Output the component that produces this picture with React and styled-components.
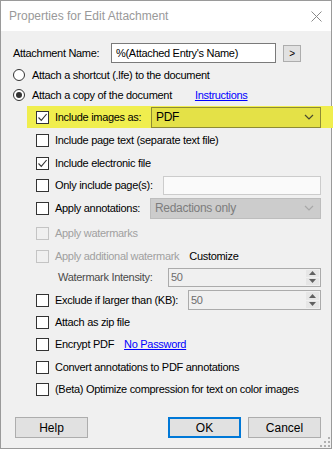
import React from 'react'
import styled, { createGlobalStyle } from 'styled-components'

const GlobalStyle = createGlobalStyle`
  html, body {
    margin: 0;
    padding: 0;
    background: #fff;
  }
  body {
    font-family: "Liberation Sans", Arial, sans-serif;
    font-size: 11px;
    letter-spacing: -0.3px;
    color: #000;
  }
`

const Check = () => (
  <svg width="11" height="11" viewBox="0 0 11 11">
    <path d="M1.5 5.5 L4.3 8.4 L9.6 2" fill="none" stroke="#333" strokeWidth="1.1" />
  </svg>
)

const Chevron = ({ color }) => (
  <svg width="10" height="6" viewBox="0 0 10 6">
    <path d="M1 1 L5 5 L9 1" fill="none" stroke={color} strokeWidth="1.2" />
  </svg>
)

const CheckBox = ({ checked, disabled }) => (
  <Box $disabled={disabled}>{checked && <Check />}</Box>
)

const Spinner = ({ value, width, height }) => (
  <SpinBox $w={width} $h={height}>
    <span>{value}</span>
    <SpinButtons>
      <SpinHalf>
        <svg width="7" height="4" viewBox="0 0 7 4"><path d="M0 4 L3.5 0 L7 4 Z" fill="#606060" /></svg>
      </SpinHalf>
      <SpinHalf>
        <svg width="7" height="4" viewBox="0 0 7 4"><path d="M0 0 L3.5 4 L7 0 Z" fill="#606060" /></svg>
      </SpinHalf>
    </SpinButtons>
  </SpinBox>
)

const Grip = () => (
  <GripMark width="10" height="10" viewBox="0 0 10 10">
    {[[8, 0], [8, 4], [4, 4], [8, 8], [4, 8], [0, 8]].map(([x, y]) => (
      <rect key={`${x}-${y}`} x={x} y={y} width="2" height="2" fill="#b0b0b0" />
    ))}
  </GripMark>
)

const App = () => {
  return (
    <>
      <GlobalStyle />
      <Window>
        <TitleBar>
          <span>Properties for Edit Attachment</span>
          <svg width="11" height="11" viewBox="0 0 11 11">
            <path d="M0.5 0.5 L10.5 10.5 M10.5 0.5 L0.5 10.5" stroke="#8a8a8a" strokeWidth="1" />
          </svg>
        </TitleBar>
        <Body>
          <Row $h={20}>
            <NameLabel>Attachment Name:</NameLabel>
            <NameInput>%(Attached Entry's Name)</NameInput>
            <SmallButton>&gt;</SmallButton>
          </Row>
          <Row $h={20} $mt={2}>
            <Radio />
            <Text $ml={7}>Attach a shortcut (.lfe) to the document</Text>
          </Row>
          <Row $h={20}>
            <Radio $selected />
            <Text $ml={7}>Attach a copy of the document</Text>
            <Link $ml={23}>Instructions</Link>
          </Row>
          <Highlight>
            <CheckBox checked />
            <Text>Include images as:</Text>
            <Select $w={170} $bg="#e4e147" $border="#8e8b35">
              <span>PDF</span>
              <Chevron color="#4a4a30" />
            </Select>
          </Highlight>
          <Row $h={22} $mt={1} $indent={23}>
            <CheckBox />
            <Text>Include page text (separate text file)</Text>
          </Row>
          <Row $h={22} $mt={1} $indent={23}>
            <CheckBox checked />
            <Text>Include electronic file</Text>
          </Row>
          <Row $h={22} $indent={23}>
            <CheckBox />
            <Text>Only include page(s):</Text>
            <TextBox $w={158} />
          </Row>
          <Row $h={22} $mt={1} $indent={23}>
            <CheckBox />
            <Text>Apply annotations:</Text>
            <Select $w={171} $bg="#cccccc" $border="#bdbdbd" $disabled>
              <span>Redactions only</span>
              <Chevron color="#a8a8a8" />
            </Select>
          </Row>
          <Row $h={22} $mt={3} $indent={23}>
            <CheckBox disabled />
            <Text $disabled>Apply watermarks</Text>
          </Row>
          <Row $h={22} $mt={1} $indent={23}>
            <CheckBox disabled />
            <Text $disabled>Apply additional watermark</Text>
            <Text $ml={10}>Customize</Text>
          </Row>
          <Row $h={20} $indent={45}>
            <Text $muted $ml={0}>Watermark Intensity:</Text>
            <Spinner value="50" width={153} height={19} />
          </Row>
          <Row $h={22} $mt={2} $indent={23}>
            <CheckBox />
            <Text>Exclude if larger than (KB):</Text>
            <Spinner value="50" width={133} height={20} />
          </Row>
          <Row $h={22} $indent={23}>
            <CheckBox />
            <Text>Attach as zip file</Text>
          </Row>
          <Row $h={22} $indent={23}>
            <CheckBox />
            <Text>Encrypt PDF</Text>
            <Link $ml={10}>No Password</Link>
          </Row>
          <Row $h={22} $mt={1} $indent={23}>
            <CheckBox />
            <Text>Convert annotations to PDF annotations</Text>
          </Row>
          <Row $h={22} $indent={23}>
            <CheckBox />
            <Text>(Beta) Optimize compression for text on color images</Text>
          </Row>
          <ButtonRow>
            <Button>Help</Button>
            <Spacer />
            <Button $default>OK</Button>
            <Button>Cancel</Button>
          </ButtonRow>
        </Body>
        <Grip />
      </Window>
    </>
  )
}

export default App

const Window = styled.div`
position:relative;
width:332px;
height:449px;
box-sizing:border-box;
border:1px solid #9a9a9a;
background:#f0f0f0;
display:flex;
flex-direction:column;`

const TitleBar = styled.div`
height:30px;
flex-shrink:0;
background:#fff;
display:flex;
align-items:center;
justify-content:space-between;
padding:0 9px 0 8px;
font-size:12px;
letter-spacing:0;
color:#999;`

const Body = styled.div`
display:flex;
flex-direction:column;
padding:12px 10px 0 12px;`

const Row = styled.div`
display:flex;
align-items:center;
height:${p => p.$h}px;
margin-top:${p => p.$mt || 0}px;
padding-left:${p => p.$indent || 0}px;`

const Highlight = styled.div`
display:flex;
align-items:center;
height:22px;
margin:1px -12px 0 14px;
padding:0 12px 0 9px;
background:#f0ee4e;`

const NameLabel = styled.span`
width:98px;
flex-shrink:0;`

const NameInput = styled.div`
width:165px;
height:20px;
flex-shrink:0;
box-sizing:border-box;
border:1px solid #7a7a7a;
background:#fff;
padding:0 4px;
display:flex;
align-items:center;`

const SmallButton = styled.div`
width:18px;
height:17px;
flex-shrink:0;
box-sizing:border-box;
margin-left:7px;
border:1px solid #adadad;
background:#e1e1e1;
display:flex;
align-items:center;
justify-content:center;
font-size:10px;`

const Radio = styled.span`
width:12px;
height:12px;
flex-shrink:0;
box-sizing:border-box;
border-radius:50%;
border:1px solid #333;
background:#fff;
display:flex;
align-items:center;
justify-content:center;
&::after{
    content:'';
    display:${p => (p.$selected ? 'block' : 'none')};
    width:6px;
    height:6px;
    border-radius:50%;
    background:#333;
}`

const Box = styled.span`
width:13px;
height:13px;
flex-shrink:0;
box-sizing:border-box;
border:1px solid ${p => (p.$disabled ? '#c4c4c4' : '#333')};
background:${p => (p.$disabled ? '#f0f0f0' : '#fff')};
display:flex;
align-items:center;
justify-content:center;`

const Text = styled.span`
margin-left:${p => (p.$ml !== undefined ? p.$ml : 6)}px;
white-space:nowrap;
color:${p => (p.$disabled ? '#a0a0a0' : p.$muted ? '#4a4a4a' : '#000')};`

const Link = styled.span`
margin-left:${p => p.$ml}px;
color:#0000ff;
text-decoration:underline;
white-space:nowrap;`

const Select = styled.div`
margin-left:auto;
width:${p => p.$w}px;
height:21px;
flex-shrink:0;
box-sizing:border-box;
border:1px solid ${p => p.$border};
background:${p => p.$bg};
color:${p => (p.$disabled ? '#7d7d7d' : '#000')};
display:flex;
align-items:center;
justify-content:space-between;
padding:0 6px 0 4px;
font-size:12px;`

const TextBox = styled.div`
margin-left:auto;
width:${p => p.$w}px;
height:19px;
flex-shrink:0;
box-sizing:border-box;
border:1px solid #cccccc;
background:#fafafa;`

const SpinBox = styled.div`
margin-left:auto;
width:${p => p.$w}px;
height:${p => p.$h}px;
flex-shrink:0;
box-sizing:border-box;
border:1px solid #ababab;
background:#f0f0f0;
color:#6d6d6d;
display:flex;
align-items:center;
justify-content:space-between;
padding:0 1px 0 2px;`

const SpinButtons = styled.div`
display:flex;
flex-direction:column;
gap:1px;
width:13px;
height:calc(100% - 2px);`

const SpinHalf = styled.div`
flex:1;
display:flex;
align-items:center;
justify-content:center;
background:#e6e6e6;`

const ButtonRow = styled.div`
display:flex;
margin-top:17px;
padding-left:2px;
gap:7px;`

const Spacer = styled.div`
flex-grow:1;`

const Button = styled.div`
width:73px;
height:21px;
box-sizing:border-box;
border:${p => (p.$default ? '2px solid #0078d7' : '1px solid #adadad')};
background:#e1e1e1;
display:flex;
align-items:center;
justify-content:center;
font-size:12px;
letter-spacing:0;`

const GripMark = styled.svg`
position:absolute;
right:1px;
bottom:1px;`
